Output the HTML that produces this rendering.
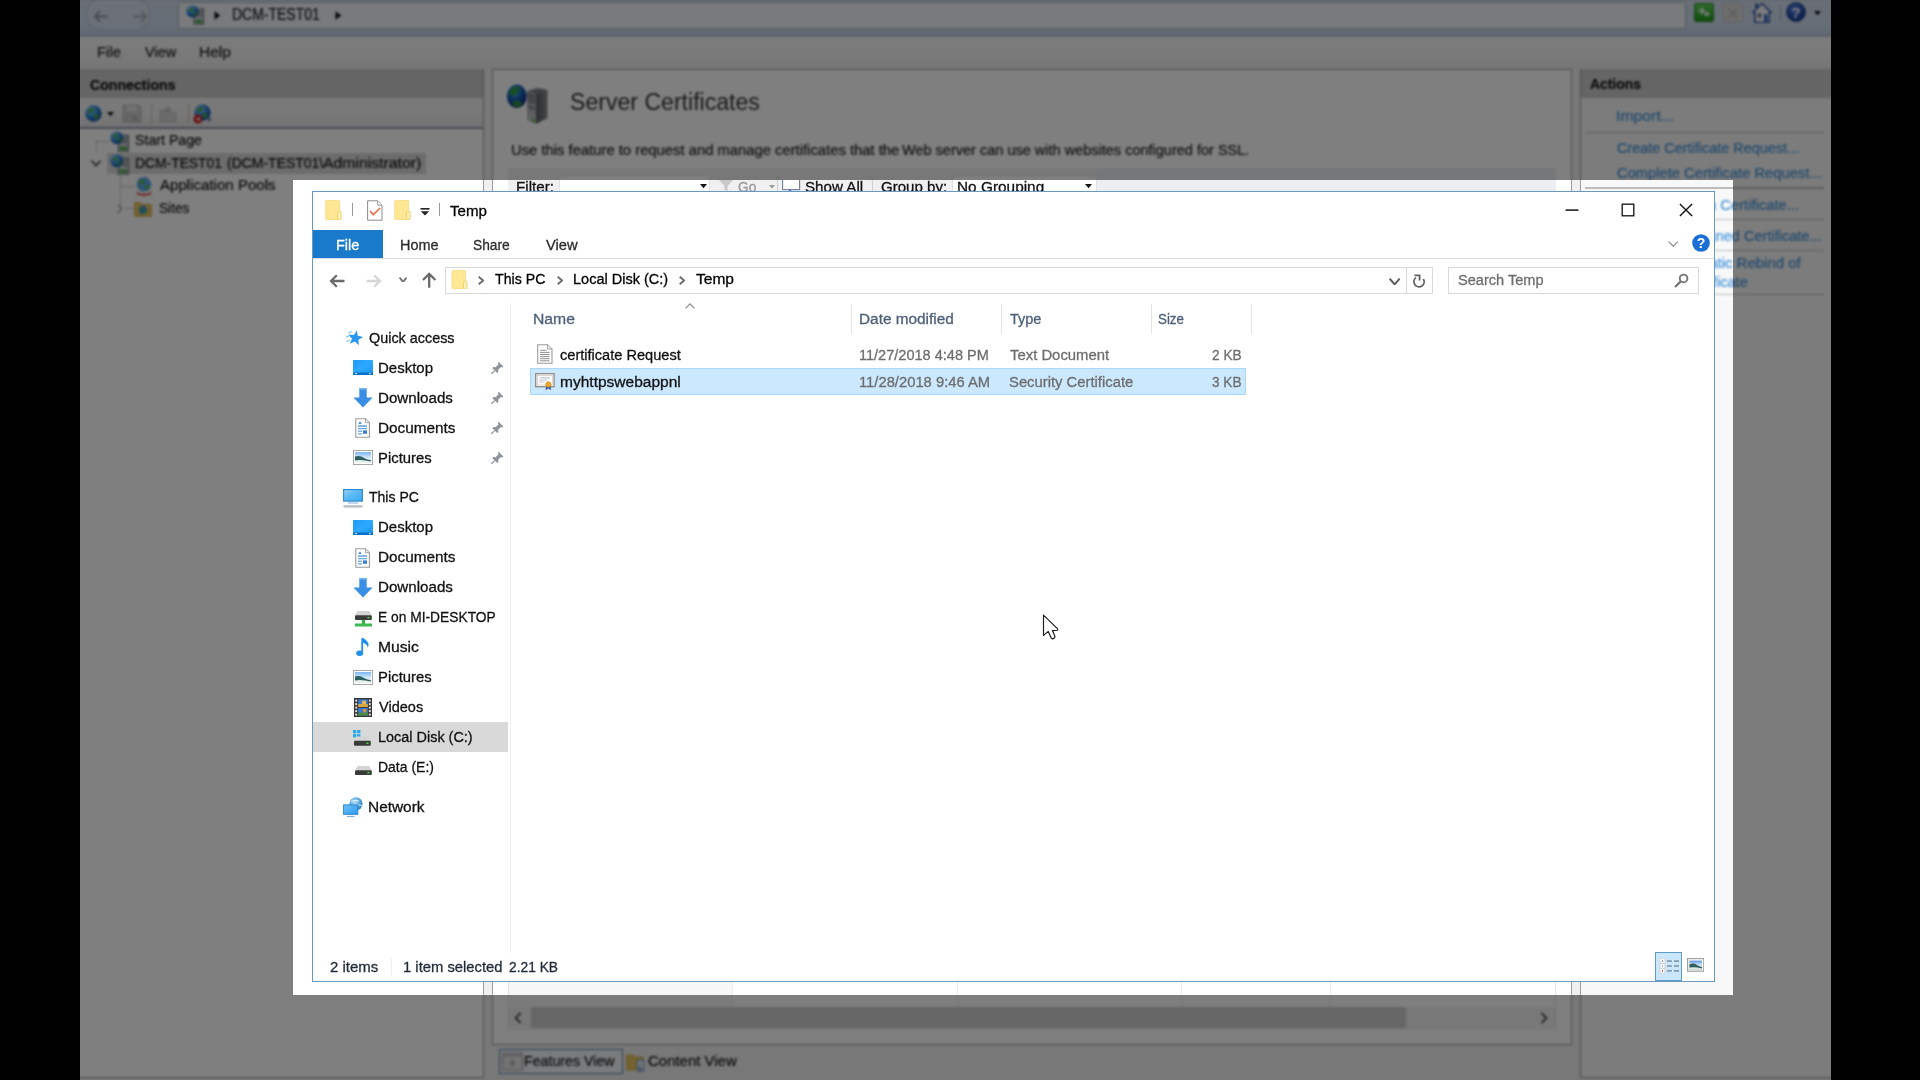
<!DOCTYPE html>
<html lang="en"><head><meta charset="utf-8"><title>Temp - File Explorer over IIS Manager</title>
<style>
html,body{margin:0;padding:0}
html{overflow:hidden;width:1920px;height:1080px}
body{width:1920px;height:1080px;overflow:hidden;position:relative;background:#000;font-family:'Liberation Sans',sans-serif;}
#root{position:absolute;left:0;top:0;width:1920px;height:1080px;overflow:hidden;background:#000}
.b{position:absolute;box-sizing:border-box;display:block}
.t{position:absolute;white-space:pre;transform-origin:0 50%;display:block;-webkit-text-stroke:0.3px currentColor}
.layer{position:absolute;left:0;top:0;width:1920px;height:1080px;overflow:hidden}
#iis{filter:blur(0.8px);top:-20px;left:-20px;width:1960px;height:1120px}
#iis>div{position:absolute;left:20px;top:20px;width:1920px;height:1080px}
#iis .t{-webkit-text-stroke:0.2px currentColor}
#ex{filter:blur(0.35px)}
#dim{position:absolute;left:293px;top:180px;width:1440px;height:815px;box-shadow:0 0 0 2000px rgba(0,0,0,0.5)}
.strip{position:absolute;left:293px;width:1440px;overflow:hidden}
#stripT{top:180px;height:11px}
#stripB{top:981px;height:14px}
#stripT>.layer{left:-293px;top:-180px}
#stripB>.layer{left:-293px;top:-981px}
</style></head>
<body>
<div id="root">
<div id="iis" class="layer"><div>
<div class="b" style="left:60px;top:-20px;width:1790px;height:1120px;background:#f0f0f0;"></div>
<div class="b" style="left:60px;top:-20px;width:1790px;height:21px;background:#d3deec;"></div>
<div class="b" style="left:60px;top:-20px;width:1790px;height:21.5px;background:#b9c6d9;"></div>
<div class="b" style="left:60px;top:0px;width:1790px;height:36px;background:linear-gradient(#d3deec,#cfdcee 60%,#c3d2e6);"></div>
<div class="b" style="left:60px;top:35px;width:1790px;height:2px;background:#b9c6d8;"></div>
<div class="b" style="left:86px;top:-2px;width:64px;height:33px;background:rgba(255,255,255,0.18);border-radius:16px;border:1px solid rgba(120,140,170,0.35);"></div>
<svg class="b" style="left:92.5px;top:9.5px;" width="15" height="13" viewBox="0 0 16 14"><path d="M15.5 7 H2 M7.8 1.2 L2 7 L7.8 12.8" fill="none" stroke="#8a94a2" stroke-width="2"/></svg>
<svg class="b" style="left:132.5px;top:9.5px;" width="15" height="13" viewBox="0 0 16 14"><path d="M0.5 7 H14 M8.2 1.2 L14 7 L8.2 12.8" fill="none" stroke="#a4adb8" stroke-width="2"/></svg>
<div class="b" style="left:177.5px;top:2px;width:1508px;height:27px;background:#f1f4f8;border:1px solid #aab6c6;border-radius:2px;"></div>
<svg class="b" style="left:186px;top:4.5px;" width="18.0" height="20.0" viewBox="0 0 18 20"><defs><radialGradient id="gl" cx="0.35" cy="0.3" r="0.8"><stop offset="0" stop-color="#9fe0ff"/><stop offset="0.5" stop-color="#2f8be0"/><stop offset="1" stop-color="#114a9a"/></radialGradient></defs><rect x="8" y="4" width="9.5" height="16" fill="#c3c9ce" stroke="#5f6a73" stroke-width="1"/><rect x="9.6" y="6.4" width="6.4" height="1.4" fill="#6e7a83"/><rect x="9.6" y="9.4" width="6.4" height="1.4" fill="#6e7a83"/><rect x="9.6" y="15" width="6.4" height="3.4" fill="#4fb04a"/><circle cx="6.4" cy="6.4" r="6" fill="url(#gl)"/><path d="M3 4.4 Q5.4 2.2 7.6 3.6 Q6.4 6 4.4 6.8 Q3.4 6 3 4.4Z M7 7.4 Q9.6 6.6 10.6 8.6 Q9 10.8 7.4 10 Z" fill="#4fae3a"/></svg>
<svg class="b" style="left:213.5px;top:10.5px;" width="7" height="9" viewBox="0 0 7 9"><path d="M0.5 0.3 L6.3 4.5 L0.5 8.7Z" fill="#111"/></svg>
<span class="t" style="left:231.86px;top:5.00px;font-size:16px;line-height:19px;color:#1a1a1a;transform:scaleX(0.8740);">DCM-TEST01</span>
<svg class="b" style="left:334.5px;top:10.5px;" width="7" height="9" viewBox="0 0 7 9"><path d="M0.5 0.3 L6.3 4.5 L0.5 8.7Z" fill="#111"/></svg>
<div class="b" style="left:1694px;top:2.5px;width:20px;height:19.5px;background:linear-gradient(#5fd05a,#1f9a1c);border-radius:2px;border:1px solid #2c8a2a;"></div>
<svg class="b" style="left:1697px;top:6px;" width="14" height="12" viewBox="0 0 14 12"><path d="M1 5 H7 M4 2 L7 5 L4 8" stroke="#fff" stroke-width="1.6" fill="none"/><path d="M13 8 H8 M10.5 5.6 L8 8 L10.5 10.4" stroke="#fff" stroke-width="1.4" fill="none"/></svg>
<div class="b" style="left:1723px;top:2.5px;width:19.5px;height:19.5px;background:#dcdcdc;border-radius:2px;border:1px solid #c2c2c2;"></div>
<svg class="b" style="left:1727px;top:6.5px;" width="12" height="12" viewBox="0 0 12 12"><path d="M1.5 1.5 L10.5 10.5 M10.5 1.5 L1.5 10.5" stroke="#bdbdbd" stroke-width="2"/></svg>
<svg class="b" style="left:1751.5px;top:1.5px;" width="20" height="21" viewBox="0 0 20 21"><path d="M10 1.5 L19.4 10.6 H17.2 V20.4 H2.8 V10.6 H0.6 Z" fill="#f4f6fa" stroke="#2f55a8" stroke-width="1.5"/><rect x="12" y="12.4" width="3.4" height="8" fill="#2f68c0"/><rect x="5.4" y="11.4" width="4" height="4" fill="#6d7f99"/><rect x="3.2" y="1.4" width="2.6" height="4.6" fill="#2f55a8"/></svg>
<div class="b" style="left:1780px;top:5px;width:1px;height:16px;background:#a9b4c4;"></div>
<svg class="b" style="left:1786px;top:2px;" width="20" height="20" viewBox="0 0 20 20"><defs><radialGradient id="hg" cx="0.4" cy="0.3" r="0.8"><stop offset="0" stop-color="#4d7fe0"/><stop offset="1" stop-color="#0c2a8a"/></radialGradient></defs><circle cx="10" cy="10" r="9.6" fill="url(#hg)" stroke="#33507e" stroke-width="0.8"/><text x="10" y="15.6" text-anchor="middle" font-family="Liberation Sans,sans-serif" font-weight="700" font-size="15.5" fill="#fff">?</text></svg>
<svg class="b" style="left:1814px;top:10.5px;" width="7" height="4.5" viewBox="0 0 7 4.5"><path d="M0 0 H7 L3.5 4.2Z" fill="#111"/></svg>
<div class="b" style="left:60px;top:37px;width:1790px;height:31.5px;background:linear-gradient(#fafafa,#ededed);"></div>
<span class="t" style="left:97.49px;top:42.00px;font-size:15.5px;line-height:19px;color:#1a1a1a;transform:scaleX(0.9585);">File</span>
<span class="t" style="left:144.61px;top:42.00px;font-size:15.5px;line-height:19px;color:#1a1a1a;transform:scaleX(0.9360);">View</span>
<span class="t" style="left:198.74px;top:42.00px;font-size:15.5px;line-height:19px;color:#1a1a1a;transform:scaleX(1.0022);">Help</span>
<div class="b" style="left:60px;top:69px;width:424px;height:1008.5px;background:#fff;border:1px solid #9e9e9e;border-left:none;"></div>
<div class="b" style="left:60px;top:69px;width:423px;height:28.5px;background:#cbcbcb;"></div>
<span class="t" style="left:90.47px;top:75.00px;font-size:15.5px;line-height:19px;color:#111;transform:scaleX(0.9115);font-weight:700;">Connections</span>
<div class="b" style="left:60px;top:97.5px;width:423px;height:30px;background:linear-gradient(#f6f6f6,#f0f0f0 60%,#e4e4e6);"></div>
<div class="b" style="left:60px;top:126.5px;width:423px;height:2px;background:#8f97a8;"></div>
<svg class="b" style="left:85px;top:104.5px;" width="17" height="17" viewBox="0 0 17 17"><defs><radialGradient id="gg" cx="0.35" cy="0.3" r="0.8"><stop offset="0" stop-color="#8fd6ff"/><stop offset="0.55" stop-color="#2a80d8"/><stop offset="1" stop-color="#123f8c"/></radialGradient></defs><circle cx="8.5" cy="8.5" r="8.2" fill="url(#gg)"/><path d="M3.4 5.4 Q6 2.4 9 3.6 Q8.4 7 5.6 8.6 Q3.8 7.6 3.4 5.4Z M9 9.6 Q12.6 8.4 14 11 Q12 14.4 9.6 13.4 Z" fill="#4cae3c"/></svg>
<svg class="b" style="left:107px;top:111.5px;" width="7" height="4.5" viewBox="0 0 7 4.5"><path d="M0 0 H7 L3.5 4.2Z" fill="#111"/></svg>
<svg class="b" style="left:122px;top:104px;" width="20" height="19" viewBox="0 0 20 19"><path d="M1 1 H16.5 L19 3.5 V18 H1Z" fill="#cfcfcf" stroke="#b4b4b4" stroke-width="1"/><rect x="4.6" y="1.6" width="10" height="6" fill="#e6e6e6"/><rect x="4" y="11" width="12" height="7" fill="#bcbcbc"/><rect x="6" y="12.6" width="3" height="4" fill="#dcdcdc"/></svg>
<div class="b" style="left:150.5px;top:104px;width:1px;height:19px;background:#c9c2a8;"></div>
<svg class="b" style="left:158.5px;top:104.5px;" width="18" height="18" viewBox="0 0 18 18"><path d="M1 5 H7 L9 7 H17 V17 H1Z" fill="#d6d6d6" stroke="#c2c2c2" stroke-width="0.8"/><path d="M9 1 L13 5 H10.6 V9 H7.4 V5 H5Z" fill="#c8c8c8"/></svg>
<div class="b" style="left:187.5px;top:104px;width:1px;height:19px;background:#c9c2a8;"></div>
<svg class="b" style="left:194px;top:103.5px;" width="17" height="17" viewBox="0 0 17 17"><defs><radialGradient id="gg" cx="0.35" cy="0.3" r="0.8"><stop offset="0" stop-color="#8fd6ff"/><stop offset="0.55" stop-color="#2a80d8"/><stop offset="1" stop-color="#123f8c"/></radialGradient></defs><circle cx="8.5" cy="8.5" r="8.2" fill="url(#gg)"/><path d="M3.4 5.4 Q6 2.4 9 3.6 Q8.4 7 5.6 8.6 Q3.8 7.6 3.4 5.4Z M9 9.6 Q12.6 8.4 14 11 Q12 14.4 9.6 13.4 Z" fill="#4cae3c"/></svg>
<svg class="b" style="left:192.5px;top:113.5px;" width="10" height="10" viewBox="0 0 10 10"><circle cx="5" cy="5" r="4.6" fill="#d8282a"/><path d="M3 5 L6.6 3 V7Z" fill="#fff"/></svg>
<svg class="b" style="left:207px;top:117px;" width="7" height="6" viewBox="0 0 7 6"><path d="M0 0 L5.5 2.6 L3 3.2 L2.2 5.6Z" fill="#5b7fb5"/></svg>
<div class="b" style="left:96px;top:140.5px;width:14px;height:1px;border-top:1px dotted #9a9a9a;"></div>
<div class="b" style="left:96px;top:140.5px;width:1px;height:12px;border-left:1px dotted #9a9a9a;"></div>
<svg class="b" style="left:110px;top:131px;" width="18.9" height="21.0" viewBox="0 0 18 20"><defs><radialGradient id="gl" cx="0.35" cy="0.3" r="0.8"><stop offset="0" stop-color="#9fe0ff"/><stop offset="0.5" stop-color="#2f8be0"/><stop offset="1" stop-color="#114a9a"/></radialGradient></defs><rect x="8" y="4" width="9.5" height="16" fill="#c3c9ce" stroke="#5f6a73" stroke-width="1"/><rect x="9.6" y="6.4" width="6.4" height="1.4" fill="#6e7a83"/><rect x="9.6" y="9.4" width="6.4" height="1.4" fill="#6e7a83"/><rect x="9.6" y="15" width="6.4" height="3.4" fill="#4fb04a"/><circle cx="6.4" cy="6.4" r="6" fill="url(#gl)"/><path d="M3 4.4 Q5.4 2.2 7.6 3.6 Q6.4 6 4.4 6.8 Q3.4 6 3 4.4Z M7 7.4 Q9.6 6.6 10.6 8.6 Q9 10.8 7.4 10 Z" fill="#4fae3a"/></svg>
<span class="t" style="left:135.38px;top:130.00px;font-size:15.5px;line-height:19px;color:#111;transform:scaleX(0.9147);">Start Page</span>
<div class="b" style="left:107px;top:153px;width:319px;height:20.5px;background:#d9d9d9;"></div>
<svg class="b" style="left:90.5px;top:160px;" width="10" height="6.5" viewBox="0 0 10 6.5"><path d="M0.6 0.6 L5.0 5.7 L9.4 0.6" fill="none" stroke="#4d4d4d" stroke-width="1.6"/></svg>
<svg class="b" style="left:110px;top:153.5px;" width="18.9" height="21.0" viewBox="0 0 18 20"><defs><radialGradient id="gl" cx="0.35" cy="0.3" r="0.8"><stop offset="0" stop-color="#9fe0ff"/><stop offset="0.5" stop-color="#2f8be0"/><stop offset="1" stop-color="#114a9a"/></radialGradient></defs><rect x="8" y="4" width="9.5" height="16" fill="#c3c9ce" stroke="#5f6a73" stroke-width="1"/><rect x="9.6" y="6.4" width="6.4" height="1.4" fill="#6e7a83"/><rect x="9.6" y="9.4" width="6.4" height="1.4" fill="#6e7a83"/><rect x="9.6" y="15" width="6.4" height="3.4" fill="#4fb04a"/><circle cx="6.4" cy="6.4" r="6" fill="url(#gl)"/><path d="M3 4.4 Q5.4 2.2 7.6 3.6 Q6.4 6 4.4 6.8 Q3.4 6 3 4.4Z M7 7.4 Q9.6 6.6 10.6 8.6 Q9 10.8 7.4 10 Z" fill="#4fae3a"/></svg>
<span class="t" style="left:135.07px;top:153.00px;font-size:15.5px;line-height:19px;color:#111;transform:scaleX(0.8938);">DCM-TEST01</span>
<span class="t" style="left:226.83px;top:153.00px;font-size:15.5px;line-height:19px;color:#111;transform:scaleX(0.9009);">(DCM-TEST01\</span>
<span class="t" style="left:323.40px;top:153.00px;font-size:15.5px;line-height:19px;color:#111;transform:scaleX(1.0176);">Administrator)</span>
<div class="b" style="left:119.5px;top:174px;width:1px;height:35px;border-left:1px dotted #9a9a9a;"></div>
<div class="b" style="left:119.5px;top:185.5px;width:14px;height:1px;border-top:1px dotted #9a9a9a;"></div>
<div class="b" style="left:126px;top:208px;width:8px;height:1px;border-top:1px dotted #9a9a9a;"></div>
<svg class="b" style="left:134px;top:175.5px;" width="20" height="20" viewBox="0 0 20 20"><circle cx="10" cy="8.4" r="7.6" fill="#5aa8e8"/><path d="M5 6 Q8 2.4 11 4 Q10 7.6 7 9 Q5.4 8 5 6Z M11 9.6 Q14.4 8.6 15.6 11 Q13.6 14 11.4 13Z" fill="#58b848"/><circle cx="10" cy="8.4" r="7.6" fill="none" stroke="#e9eef5" stroke-width="1.4" stroke-dasharray="5 3"/><path d="M2 15 Q6 19.4 10 17.4 Q14 19.4 18 15 L16.6 18.6 Q10 21 3.4 18.6Z" fill="#d63a32"/></svg>
<span class="t" style="left:159.75px;top:175.00px;font-size:15.5px;line-height:19px;color:#111;transform:scaleX(0.9722);">Application Pools</span>
<svg class="b" style="left:116.5px;top:203.5px;" width="5.5" height="10" viewBox="0 0 5.5 10"><path d="M0.7 0.7 L4.7 5.0 L0.7 9.3" fill="none" stroke="#a0a0a0" stroke-width="1.3"/></svg>
<svg class="b" style="left:134px;top:198.5px;" width="18" height="18" viewBox="0 0 18 18"><path d="M0.6 3.6 H6.6 L8.4 5.4 H17.4 V17.4 H0.6Z" fill="#e8c45c" stroke="#c9a53e" stroke-width="0.8"/><circle cx="9" cy="11" r="4.2" fill="#3f93dc"/><path d="M6.6 10 Q8.4 7.6 10 8.6 Q9.6 10.8 7.8 11.8Z M9.6 11.8 Q11.6 11 12.4 12.6 Q11 14.4 9.8 13.8Z" fill="#58b848"/></svg>
<span class="t" style="left:159.15px;top:198.00px;font-size:15.5px;line-height:19px;color:#111;transform:scaleX(0.8803);">Sites</span>
<div class="b" style="left:492px;top:69px;width:1079.5px;height:976px;background:#fff;border:1px solid #9e9e9e;"></div>
<svg class="b" style="left:500px;top:80px;" width="50" height="46" viewBox="0 0 50 46"><defs><radialGradient id="bg1" cx="0.38" cy="0.28" r="0.75"><stop offset="0" stop-color="#7fe0e8"/><stop offset="0.35" stop-color="#1f74c8"/><stop offset="1" stop-color="#0a1f7a"/></radialGradient><linearGradient id="bs" x1="0" y1="0" x2="1" y2="0"><stop offset="0" stop-color="#5a5c5e"/><stop offset="1" stop-color="#8a8c8e"/></linearGradient><linearGradient id="bf" x1="0" y1="0" x2="0" y2="1"><stop offset="0" stop-color="#8f959b"/><stop offset="1" stop-color="#c9cdd1"/></linearGradient></defs><path d="M27 11 L38 8 L47.5 10 L36 13.5Z" fill="#7a7d80"/><path d="M36 13.5 L47.5 10 V38 L36 44Z" fill="url(#bs)"/><path d="M27 11 L36 13.5 V44 L27 40.5Z" fill="url(#bf)"/><path d="M28.4 15 L34.6 16.8 M28.4 18 L34.6 19.8 M28.4 21 L34.6 22.8 M28.4 27 L34.6 28.8" stroke="#5c6368" stroke-width="1.1"/><path d="M31.6 38.6 L35 39.8 V42.6 L31.6 41.4Z" fill="#5fc23a"/><ellipse cx="16.8" cy="16.3" rx="9.9" ry="11.7" fill="url(#bg1)"/><path d="M9.5 12 Q12 6.2 18 6.6 Q21 9 17.6 13.4 Q13 16 10.4 15.4Z M12 22 Q17 19.4 22.6 22.4 Q21 27 16.8 27.6 Q13 26.4 12 22Z" fill="#2f9a3a" opacity="0.9"/></svg>
<span class="t" style="left:569.99px;top:88.00px;font-size:23.5px;line-height:28px;color:#333;transform:scaleX(0.9823);-webkit-text-stroke:0;">Server Certificates</span>
<span class="t" style="left:510.89px;top:140.00px;font-size:15.5px;line-height:19px;color:#1a1a1a;transform:scaleX(0.9547);">Use this feature to request and manage certificates that the</span>
<span class="t" style="left:901.91px;top:140.00px;font-size:15.5px;line-height:19px;color:#1a1a1a;transform:scaleX(0.9362);">Web server can use with websites configured for SSL.</span>
<div class="b" style="left:508px;top:168px;width:1047.5px;height:30px;background:#eceef2;"></div>
<div class="b" style="left:508px;top:168px;width:589px;height:30px;background:#f1f0f0;"></div>
<div class="b" style="left:558.5px;top:174.5px;width:151px;height:22px;background:#fff;border:1px solid #e2e2e2;"></div>
<div class="b" style="left:777px;top:176px;width:1px;height:19px;background:#d0d0d0;"></div>
<div class="b" style="left:872px;top:176px;width:1px;height:19px;background:#d0d0d0;"></div>
<div class="b" style="left:951.5px;top:174.5px;width:145px;height:22px;background:#fff;border:1px solid #e2e2e2;"></div>
<div class="b" style="left:508px;top:198px;width:1048px;height:832px;background:#fff;border:1px solid #e3e3e3;"></div>
<div class="b" style="left:509px;top:222px;width:223.5px;height:785px;background:#f7f7f7;"></div>
<div class="b" style="left:732px;top:199px;width:1px;height:808px;background:#ededed;"></div>
<div class="b" style="left:957px;top:199px;width:1px;height:808px;background:#ededed;"></div>
<div class="b" style="left:1181px;top:199px;width:1px;height:808px;background:#ededed;"></div>
<div class="b" style="left:1330px;top:199px;width:1px;height:808px;background:#ededed;"></div>
<div class="b" style="left:509px;top:1007px;width:1046px;height:21px;background:#f0f0f0;"></div>
<div class="b" style="left:530.5px;top:1007px;width:875px;height:21px;background:#cdcdcd;"></div>
<svg class="b" style="left:514px;top:1011.5px;" width="8" height="12" viewBox="0 0 8 12"><path d="M6.6 1 L1.6 6 L6.6 11" stroke="#555" stroke-width="2" fill="none"/></svg>
<svg class="b" style="left:1540px;top:1011.5px;" width="8" height="12" viewBox="0 0 8 12"><path d="M1.4 1 L6.4 6 L1.4 11" stroke="#555" stroke-width="2" fill="none"/></svg>
<div class="b" style="left:498.5px;top:1048.5px;width:124.5px;height:25.5px;background:#f4f7fa;border:1.5px solid #4f86b0;"></div>
<svg class="b" style="left:502px;top:1051px;" width="22" height="20" viewBox="0 0 22 20"><rect x="0.6" y="2" width="20" height="17" fill="#e8e8e8" stroke="#9a9a9a" stroke-width="1"/><rect x="0.6" y="2" width="20" height="4" fill="#c9c9c9"/><rect x="8" y="9" width="5" height="6" fill="#bdbdbd"/></svg>
<span class="t" style="left:524.34px;top:1051.00px;font-size:15.5px;line-height:19px;color:#111;transform:scaleX(0.9174);">Features View</span>
<svg class="b" style="left:626px;top:1051px;" width="20" height="21" viewBox="0 0 20 21"><path d="M0.6 4 H7 L9 6 H17 V19 H0.6Z" fill="#e9c661" stroke="#c9a53e" stroke-width="0.8"/><path d="M11 9 H18 V20.4 H11Z" fill="#dfe9f6" stroke="#6e8cc0" stroke-width="0.9"/><path d="M12 14 L17 19.4 L14.8 18.8 L14 20.6Z" fill="#5b7fb5"/></svg>
<span class="t" style="left:648.25px;top:1051.00px;font-size:15.5px;line-height:19px;color:#111;transform:scaleX(0.9653);">Content View</span>
<div class="b" style="left:1580px;top:69px;width:280px;height:1008.5px;background:#f8f8f8;border:1px solid #9e9e9e;border-right:none;"></div>
<div class="b" style="left:1581px;top:69px;width:279px;height:28.5px;background:#cbcbcb;"></div>
<span class="t" style="left:1589.65px;top:74.00px;font-size:15.5px;line-height:19px;color:#111;transform:scaleX(0.8945);font-weight:700;">Actions</span>
<span class="t" style="left:1616.02px;top:106.00px;font-size:15.5px;line-height:19px;color:#3f90d8;transform:scaleX(1.0193);">Import...</span>
<div class="b" style="left:1585px;top:131.5px;width:239px;height:1.5px;background:#bcbcbc;"></div>
<span class="t" style="left:1616.78px;top:138.00px;font-size:15.5px;line-height:19px;color:#3f90d8;transform:scaleX(0.9309);">Create Certificate Request...</span>
<span class="t" style="left:1616.76px;top:163.00px;font-size:15.5px;line-height:19px;color:#3f90d8;transform:scaleX(0.9497);">Complete Certificate Request...</span>
<div class="b" style="left:1585px;top:187px;width:239px;height:1.5px;background:#bcbcbc;"></div>
<span class="t" style="left:1616.76px;top:195.00px;font-size:15.5px;line-height:19px;color:#3f90d8;transform:scaleX(0.9519);">Create Domain Certificate...</span>
<div class="b" style="left:1585px;top:218.5px;width:239px;height:1.5px;background:#bcbcbc;"></div>
<span class="t" style="left:1616.77px;top:226.00px;font-size:15.5px;line-height:19px;color:#3f90d8;transform:scaleX(0.9386);">Create Self-Signed Certificate...</span>
<div class="b" style="left:1585px;top:249.5px;width:239px;height:1.5px;background:#bcbcbc;"></div>
<span class="t" style="left:1616.28px;top:253.00px;font-size:15.5px;line-height:19px;color:#3f90d8;transform:scaleX(0.9654);">Enable Automatic Rebind of</span>
<span class="t" style="left:1616.31px;top:272.00px;font-size:15.5px;line-height:19px;color:#3f90d8;transform:scaleX(0.9444);">Renewed Certificate</span>
<div class="b" style="left:1585px;top:293.5px;width:239px;height:1.5px;background:#bcbcbc;"></div>
<svg class="b" style="left:1592px;top:301px;" width="18" height="18" viewBox="0 0 18 18"><circle cx="9" cy="9" r="8.6" fill="#2a5fd0"/><text x="9" y="14" text-anchor="middle" font-family="Liberation Sans,sans-serif" font-weight="700" font-size="13" fill="#fff">?</text></svg>
<span class="t" style="left:1616.26px;top:300.00px;font-size:15.5px;line-height:19px;color:#3f90d8;transform:scaleX(0.9855);">Help</span>
</div></div>
<div id="dim"></div>
<div id="stripT" class="strip"><div class="layer">
<div class="b" style="left:60px;top:-20px;width:1790px;height:1120px;background:#f0f0f0;"></div>
<div class="b" style="left:60px;top:69px;width:424px;height:1008.5px;background:#fff;border:1px solid #9e9e9e;border-left:none;"></div>
<div class="b" style="left:492px;top:69px;width:1079.5px;height:976px;background:#fff;border:1px solid #9e9e9e;"></div>
<div class="b" style="left:508px;top:168px;width:1047.5px;height:30px;background:#eceef2;"></div>
<div class="b" style="left:508px;top:168px;width:589px;height:30px;background:#f1f0f0;"></div>
<div class="b" style="left:558.5px;top:174.5px;width:151px;height:22px;background:#fff;border:1px solid #e2e2e2;"></div>
<div class="b" style="left:777px;top:176px;width:1px;height:19px;background:#d0d0d0;"></div>
<div class="b" style="left:872px;top:176px;width:1px;height:19px;background:#d0d0d0;"></div>
<div class="b" style="left:951.5px;top:174.5px;width:145px;height:22px;background:#fff;border:1px solid #e2e2e2;"></div>
<div class="b" style="left:508px;top:198px;width:1048px;height:832px;background:#fff;border:1px solid #e3e3e3;"></div>
<div class="b" style="left:509px;top:222px;width:223.5px;height:785px;background:#f7f7f7;"></div>
<div class="b" style="left:732px;top:199px;width:1px;height:808px;background:#ededed;"></div>
<div class="b" style="left:957px;top:199px;width:1px;height:808px;background:#ededed;"></div>
<div class="b" style="left:1181px;top:199px;width:1px;height:808px;background:#ededed;"></div>
<div class="b" style="left:1330px;top:199px;width:1px;height:808px;background:#ededed;"></div>
<div class="b" style="left:1580px;top:69px;width:280px;height:1008.5px;background:#f8f8f8;border:1px solid #9e9e9e;border-right:none;"></div>
<div class="b" style="left:1585px;top:131.5px;width:239px;height:1.5px;background:#bcbcbc;"></div>
<div class="b" style="left:1585px;top:187px;width:239px;height:1.5px;background:#bcbcbc;"></div>
<div class="b" style="left:1585px;top:218.5px;width:239px;height:1.5px;background:#bcbcbc;"></div>
<div class="b" style="left:1585px;top:249.5px;width:239px;height:1.5px;background:#bcbcbc;"></div>
<div class="b" style="left:1585px;top:293.5px;width:239px;height:1.5px;background:#bcbcbc;"></div>
<span class="t" style="left:516.26px;top:177.00px;font-size:15.5px;line-height:19px;color:#111;transform:scaleX(0.9824);">Filter:</span>
<svg class="b" style="left:699.5px;top:184px;" width="7" height="4.5" viewBox="0 0 7 4.5"><path d="M0 0 H7 L3.5 4.2Z" fill="#111"/></svg>
<svg class="b" style="left:718px;top:179px;" width="16" height="13" viewBox="0 0 16 13"><path d="M0.5 0.5 H15.5 L9.6 7 V12.4 L6.4 10.6 V7Z" fill="#c9c9c9"/></svg>
<span class="t" style="left:738.31px;top:177.00px;font-size:15.5px;line-height:19px;color:#9a9a9a;transform:scaleX(0.8863);">Go</span>
<svg class="b" style="left:768.5px;top:185px;" width="6" height="4" viewBox="0 0 6 4"><path d="M0 0 H6 L3 3.6Z" fill="#9a9a9a"/></svg>
<svg class="b" style="left:782px;top:177px;" width="20" height="17" viewBox="0 0 20 17"><rect x="0.6" y="0.6" width="17" height="12" fill="#fff" stroke="#6e7f99" stroke-width="1.1"/><path d="M3 14.6 H9 M7 12.4 L9.4 14.6 L7 16.6" stroke="#3a6fc4" stroke-width="1.3" fill="none"/><path d="M12 14.6 H18" stroke="#3a6fc4" stroke-width="1.3"/></svg>
<span class="t" style="left:805.34px;top:177.00px;font-size:15.5px;line-height:19px;color:#111;transform:scaleX(0.9786);">Show All</span>
<span class="t" style="left:881.25px;top:177.00px;font-size:15.5px;line-height:19px;color:#111;transform:scaleX(0.9715);">Group by:</span>
<span class="t" style="left:956.75px;top:177.00px;font-size:15.5px;line-height:19px;color:#111;transform:scaleX(0.9926);">No Grouping</span>
<svg class="b" style="left:1084.5px;top:184px;" width="7" height="4.5" viewBox="0 0 7 4.5"><path d="M0 0 H7 L3.5 4.2Z" fill="#111"/></svg>
</div></div>
<div id="stripB" class="strip"><div class="layer">
<div class="b" style="left:60px;top:-20px;width:1790px;height:1120px;background:#f0f0f0;"></div>
<div class="b" style="left:60px;top:69px;width:424px;height:1008.5px;background:#fff;border:1px solid #9e9e9e;border-left:none;"></div>
<div class="b" style="left:492px;top:69px;width:1079.5px;height:976px;background:#fff;border:1px solid #9e9e9e;"></div>
<div class="b" style="left:508px;top:168px;width:1047.5px;height:30px;background:#eceef2;"></div>
<div class="b" style="left:508px;top:168px;width:589px;height:30px;background:#f1f0f0;"></div>
<div class="b" style="left:558.5px;top:174.5px;width:151px;height:22px;background:#fff;border:1px solid #e2e2e2;"></div>
<div class="b" style="left:777px;top:176px;width:1px;height:19px;background:#d0d0d0;"></div>
<div class="b" style="left:872px;top:176px;width:1px;height:19px;background:#d0d0d0;"></div>
<div class="b" style="left:951.5px;top:174.5px;width:145px;height:22px;background:#fff;border:1px solid #e2e2e2;"></div>
<div class="b" style="left:508px;top:198px;width:1048px;height:832px;background:#fff;border:1px solid #e3e3e3;"></div>
<div class="b" style="left:509px;top:222px;width:223.5px;height:785px;background:#f7f7f7;"></div>
<div class="b" style="left:732px;top:199px;width:1px;height:808px;background:#ededed;"></div>
<div class="b" style="left:957px;top:199px;width:1px;height:808px;background:#ededed;"></div>
<div class="b" style="left:1181px;top:199px;width:1px;height:808px;background:#ededed;"></div>
<div class="b" style="left:1330px;top:199px;width:1px;height:808px;background:#ededed;"></div>
<div class="b" style="left:1580px;top:69px;width:280px;height:1008.5px;background:#f8f8f8;border:1px solid #9e9e9e;border-right:none;"></div>
<div class="b" style="left:1585px;top:131.5px;width:239px;height:1.5px;background:#bcbcbc;"></div>
<div class="b" style="left:1585px;top:187px;width:239px;height:1.5px;background:#bcbcbc;"></div>
<div class="b" style="left:1585px;top:218.5px;width:239px;height:1.5px;background:#bcbcbc;"></div>
<div class="b" style="left:1585px;top:249.5px;width:239px;height:1.5px;background:#bcbcbc;"></div>
<div class="b" style="left:1585px;top:293.5px;width:239px;height:1.5px;background:#bcbcbc;"></div>
</div></div>
<div class="b" style="left:0px;top:0px;width:79.5px;height:1080px;background:#000;"></div>
<div class="b" style="left:1830.5px;top:0px;width:90px;height:1080px;background:#000;"></div>
<div id="ex" class="layer">
<div class="b" style="left:312px;top:190.5px;width:1403px;height:791px;background:#fff;border:1.2px solid #6699c4;"></div>
<svg class="b" style="left:325px;top:200px;" width="17" height="20" viewBox="0 0 17 20"><rect x="0.7" y="0.5" width="14" height="19" rx="0.8" fill="#ffe794" stroke="#f3d778" stroke-width="0.7"/><rect x="12.6" y="11.6" width="3.6" height="7.9" rx="0.6" fill="#fff0b4" stroke="#eccb62" stroke-width="0.8"/></svg>
<div class="b" style="left:351.5px;top:203px;width:1px;height:13px;background:#9a9a9a;"></div>
<svg class="b" style="left:365.5px;top:200px;" width="18" height="21" viewBox="0 0 18 21"><path d="M1.6 0.8 H11.6 L16 5.2 V20.2 H1.6 Z" fill="#fff" stroke="#8c8c8c" stroke-width="1"/><path d="M11.6 0.8 V5.2 H16" fill="#f4f4f4" stroke="#9a9a9a" stroke-width="0.9"/><path d="M3.9 10.9 L7.3 14.6 L14.2 8" fill="none" stroke="#e06a45" stroke-width="1.5"/></svg>
<svg class="b" style="left:394px;top:200px;" width="17" height="20" viewBox="0 0 17 20"><rect x="0.7" y="0.5" width="14" height="19" rx="0.8" fill="#ffe794" stroke="#f3d778" stroke-width="0.7"/><rect x="12.6" y="11.6" width="3.6" height="7.9" rx="0.6" fill="#fff0b4" stroke="#eccb62" stroke-width="0.8"/></svg>
<svg class="b" style="left:420px;top:207.7px;" width="10" height="8" viewBox="0 0 10 8"><rect x="0.5" y="0" width="9" height="1.6" fill="#222"/><path d="M0.8 3.2 H9.2 L5 7.4 Z" fill="#222"/></svg>
<div class="b" style="left:439px;top:203px;width:1px;height:13px;background:#9a9a9a;"></div>
<span class="t" style="left:449.72px;top:201.00px;font-size:15.5px;line-height:19px;color:#000;transform:scaleX(0.9754);">Temp</span>
<svg class="b" style="left:1565px;top:208.6px;" width="14" height="2.4" viewBox="0 0 14 2.4"><rect x="0.5" y="0.3" width="13" height="1.6" fill="#222"/></svg>
<svg class="b" style="left:1621px;top:202.5px;" width="14" height="14" viewBox="0 0 14 14"><rect x="1.2" y="1.2" width="11.6" height="11.6" fill="none" stroke="#111" stroke-width="1.3"/></svg>
<svg class="b" style="left:1679px;top:202.5px;" width="14" height="14" viewBox="0 0 14 14"><path d="M0.9 0.9 L13.1 13.1 M13.1 0.9 L0.9 13.1" stroke="#111" stroke-width="1.35" fill="none"/></svg>
<div class="b" style="left:313px;top:229.5px;width:69.5px;height:28px;background:#1979ca;"></div>
<span class="t" style="left:336.33px;top:235.00px;font-size:15.5px;line-height:19px;color:#fff;transform:scaleX(0.9325);">File</span>
<span class="t" style="left:399.58px;top:235.00px;font-size:15.5px;line-height:19px;color:#2b2b2b;transform:scaleX(0.9321);">Home</span>
<span class="t" style="left:473.40px;top:235.00px;font-size:15.5px;line-height:19px;color:#2b2b2b;transform:scaleX(0.8873);">Share</span>
<span class="t" style="left:545.91px;top:235.00px;font-size:15.5px;line-height:19px;color:#2b2b2b;transform:scaleX(0.9480);">View</span>
<div class="b" style="left:313px;top:257.5px;width:1401px;height:1px;background:#dadbdc;"></div>
<svg class="b" style="left:1668px;top:240.5px;" width="10.5" height="6" viewBox="0 0 10.5 6"><path d="M0.6 0.6 L5.25 5.2 L9.9 0.6" fill="none" stroke="#8d8d8d" stroke-width="1.3"/></svg>
<svg class="b" style="left:1691.5px;top:234px;" width="18" height="18" viewBox="0 0 18 18"><circle cx="9" cy="9" r="8.8" fill="#1a6fd4"/><text x="9" y="14" text-anchor="middle" font-family="Liberation Sans,sans-serif" font-weight="700" font-size="14" fill="#fff">?</text></svg>
<svg class="b" style="left:329px;top:273.5px;" width="16" height="14" viewBox="0 0 16 14"><path d="M15.5 7 H2 M7.8 1.2 L2 7 L7.8 12.8" fill="none" stroke="#6a6a6a" stroke-width="2.3"/></svg>
<svg class="b" style="left:365.5px;top:273.5px;" width="16" height="14" viewBox="0 0 16 14"><path d="M0.5 7 H14 M8.2 1.2 L14 7 L8.2 12.8" fill="none" stroke="#d6d6d6" stroke-width="2.3"/></svg>
<svg class="b" style="left:399.2px;top:276.8px;" width="8.2" height="5.6" viewBox="0 0 8.2 5.6"><path d="M0.6 0.6 L4.1 4.8 L7.6 0.6" fill="none" stroke="#707070" stroke-width="1.9"/></svg>
<svg class="b" style="left:421.6px;top:272px;" width="14" height="16" viewBox="0 0 14 16"><path d="M7.2 15.8 V2.2 M1 8 L7.2 1.9 L13.4 8" fill="none" stroke="#6a6a6a" stroke-width="2.3"/></svg>
<div class="b" style="left:445px;top:267px;width:987.5px;height:26.5px;background:#fff;border:1px solid #d9d9d9;"></div>
<svg class="b" style="left:451px;top:269.5px;" width="17" height="19.5" viewBox="0 0 17 20"><rect x="0.7" y="0.5" width="14" height="19" rx="0.8" fill="#ffe794" stroke="#f3d778" stroke-width="0.7"/><rect x="12.6" y="11.6" width="3.6" height="7.9" rx="0.6" fill="#fff0b4" stroke="#eccb62" stroke-width="0.8"/></svg>
<svg class="b" style="left:477.6px;top:275.6px;" width="6" height="9" viewBox="0 0 6 9"><path d="M0.7 0.7 L5.2 4.5 L0.7 8.3" fill="none" stroke="#6a6a6a" stroke-width="1.9"/></svg>
<svg class="b" style="left:556.6px;top:275.6px;" width="6" height="9" viewBox="0 0 6 9"><path d="M0.7 0.7 L5.2 4.5 L0.7 8.3" fill="none" stroke="#6a6a6a" stroke-width="1.9"/></svg>
<svg class="b" style="left:678.6px;top:275.6px;" width="6" height="9" viewBox="0 0 6 9"><path d="M0.7 0.7 L5.2 4.5 L0.7 8.3" fill="none" stroke="#6a6a6a" stroke-width="1.9"/></svg>
<span class="t" style="left:494.73px;top:269.00px;font-size:15.5px;line-height:19px;color:#000;transform:scaleX(0.9141);">This PC</span>
<span class="t" style="left:572.57px;top:269.00px;font-size:15.5px;line-height:19px;color:#000;transform:scaleX(0.9357);">Local Disk (C:)</span>
<span class="t" style="left:695.71px;top:269.00px;font-size:15.5px;line-height:19px;color:#000;transform:scaleX(1.0025);">Temp</span>
<svg class="b" style="left:1389px;top:278px;" width="11.3" height="7.2" viewBox="0 0 11.3 7.2"><path d="M0.6 0.6 L5.65 6.4 L10.700000000000001 0.6" fill="none" stroke="#5e5e5e" stroke-width="2"/></svg>
<div class="b" style="left:1406px;top:268px;width:1px;height:24.5px;background:#d9d9d9;"></div>
<svg class="b" style="left:1412.4px;top:272.6px;" width="14" height="16" viewBox="0 0 14 16"><path d="M11.3 5.9 A5.1 5.1 0 1 1 4 4.6" fill="none" stroke="#5e5e5e" stroke-width="1.8"/><path d="M2.4 2.3 H7.6 V7.4" fill="none" stroke="#5e5e5e" stroke-width="1.8"/></svg>
<div class="b" style="left:1447.5px;top:267px;width:251.5px;height:26.5px;background:#fff;border:1px solid #d9d9d9;"></div>
<span class="t" style="left:1458.11px;top:270.00px;font-size:15.5px;line-height:19px;color:#6d6d6d;transform:scaleX(0.9392);">Search Temp</span>
<svg class="b" style="left:1673.5px;top:272.5px;" width="15" height="15" viewBox="0 0 15 15"><circle cx="9.6" cy="5.4" r="3.8" fill="none" stroke="#747474" stroke-width="1.9"/><path d="M6.8 8.4 L1 14" stroke="#747474" stroke-width="2.2"/></svg>
<div class="b" style="left:510px;top:303px;width:1px;height:650px;background:#f0f0f0;"></div>
<div class="b" style="left:313px;top:722px;width:194.5px;height:30px;background:#d9d9d9;"></div>
<svg class="b" style="left:345px;top:329.8px;" width="19" height="16" viewBox="0 0 19 16"><path d="M11.8 0.4 L12.8 5.8 L18.2 7.1 L13.4 9.8 L13.9 15.3 L9.8 11.5 L4.7 13.7 L7.0 8.7 L3.4 4.5 L8.9 5.1Z" fill="#2a98f0"/><path d="M6.6 1.6 L3.4 3 M4.4 5.6 L0.8 7.2 M4.6 10 L1.4 11.4" stroke="#7cc4f8" stroke-width="1.2"/></svg>
<span class="t" style="left:368.77px;top:328.00px;font-size:15.5px;line-height:19px;color:#111;transform:scaleX(0.9283);">Quick access</span>
<svg class="b" style="left:353px;top:360.2px;" width="20" height="15" viewBox="0 0 20 15"><defs><linearGradient id="dg" x1="0" y1="0" x2="1" y2="1"><stop offset="0" stop-color="#1e9af5"/><stop offset="0.5" stop-color="#2fa9ff"/><stop offset="1" stop-color="#1794f0"/></linearGradient></defs><rect x="0" y="0" width="20" height="15" rx="0.8" fill="url(#dg)"/><rect x="0" y="12.5" width="20" height="2.5" fill="#0d70c6"/><rect x="2.2" y="13" width="1.6" height="1.2" fill="#d9ecff"/><rect x="16" y="13" width="1.6" height="1.2" fill="#d9ecff"/></svg>
<span class="t" style="left:378.18px;top:358.00px;font-size:15.5px;line-height:19px;color:#111;transform:scaleX(0.9667);">Desktop</span>
<svg class="b" style="left:491px;top:361.3px;" width="13" height="13.5" viewBox="0 0 13 13.5"><path d="M7.6 0.8 L12.4 5.6 L11.2 6.4 L10 6 L7.2 8.8 L7.4 11 L6.2 12 L1.4 7.2 L2.4 6 L4.6 6.2 L7.4 3.4 L7 2 Z" fill="#8e9499"/><path d="M3.6 9.6 L0.4 12.8" stroke="#8e9499" stroke-width="1.3"/></svg>
<svg class="b" style="left:352.8px;top:388px;" width="20" height="20" viewBox="0 0 20 20"><path d="M6.3 0.4 H13.7 V9.4 H19.6 L10 19.6 L0.4 9.4 H6.3 Z" fill="#3a8ee6"/><path d="M6.3 0.4 H13.7 V2 H6.3Z" fill="#5aa5ee"/></svg>
<span class="t" style="left:378.17px;top:388.00px;font-size:15.5px;line-height:19px;color:#111;transform:scaleX(0.9762);">Downloads</span>
<svg class="b" style="left:491px;top:391.3px;" width="13" height="13.5" viewBox="0 0 13 13.5"><path d="M7.6 0.8 L12.4 5.6 L11.2 6.4 L10 6 L7.2 8.8 L7.4 11 L6.2 12 L1.4 7.2 L2.4 6 L4.6 6.2 L7.4 3.4 L7 2 Z" fill="#8e9499"/><path d="M3.6 9.6 L0.4 12.8" stroke="#8e9499" stroke-width="1.3"/></svg>
<svg class="b" style="left:355px;top:417.8px;" width="15" height="20" viewBox="0 0 15 20"><path d="M0.8 0.8 H10.5 L14.4 4.7 V19.2 H0.8 Z" fill="#fff" stroke="#9a9a9a" stroke-width="1.1"/><path d="M10.5 0.8 V4.7 H14.4" fill="#eee" stroke="#9a9a9a" stroke-width="0.9"/><path d="M5 3.2 L3.2 6 H6.8 Z" fill="#4a90d9"/><rect x="3" y="7.4" width="9" height="1.3" fill="#4a90d9"/><rect x="3" y="10" width="9" height="1.3" fill="#6aa8e4"/><rect x="3" y="12.6" width="4" height="1.3" fill="#6aa8e4"/><rect x="8" y="12.4" width="4" height="3.4" fill="#3b7fd0"/><rect x="3" y="15.2" width="4" height="1.3" fill="#6aa8e4"/></svg>
<span class="t" style="left:378.16px;top:418.00px;font-size:15.5px;line-height:19px;color:#111;transform:scaleX(0.9878);">Documents</span>
<svg class="b" style="left:491px;top:421.3px;" width="13" height="13.5" viewBox="0 0 13 13.5"><path d="M7.6 0.8 L12.4 5.6 L11.2 6.4 L10 6 L7.2 8.8 L7.4 11 L6.2 12 L1.4 7.2 L2.4 6 L4.6 6.2 L7.4 3.4 L7 2 Z" fill="#8e9499"/><path d="M3.6 9.6 L0.4 12.8" stroke="#8e9499" stroke-width="1.3"/></svg>
<svg class="b" style="left:353px;top:450.2px;" width="20" height="15" viewBox="0 0 20 15"><rect x="0.5" y="0.5" width="19" height="14" fill="#fff" stroke="#a8a8a8" stroke-width="1"/><defs><linearGradient id="pg" x1="0" y1="0" x2="0" y2="1"><stop offset="0" stop-color="#7cb6f2"/><stop offset="0.55" stop-color="#d8ecfb"/><stop offset="1" stop-color="#fff"/></linearGradient></defs><rect x="2" y="2" width="16" height="11" fill="url(#pg)"/><path d="M2 6.4 Q7 5 11 8 Q14.5 10 18 10.2 V13 H2 Z" fill="#2c5f62"/><path d="M2 10.6 Q8 9.2 18 11.6 V13 H2Z" fill="#e9f1ee"/></svg>
<span class="t" style="left:378.19px;top:448.00px;font-size:15.5px;line-height:19px;color:#111;transform:scaleX(0.9584);">Pictures</span>
<svg class="b" style="left:491px;top:451.3px;" width="13" height="13.5" viewBox="0 0 13 13.5"><path d="M7.6 0.8 L12.4 5.6 L11.2 6.4 L10 6 L7.2 8.8 L7.4 11 L6.2 12 L1.4 7.2 L2.4 6 L4.6 6.2 L7.4 3.4 L7 2 Z" fill="#8e9499"/><path d="M3.6 9.6 L0.4 12.8" stroke="#8e9499" stroke-width="1.3"/></svg>
<svg class="b" style="left:343px;top:489px;" width="20" height="19" viewBox="0 0 20 19"><defs><linearGradient id="tp" x1="0" y1="0" x2="1" y2="1"><stop offset="0" stop-color="#8fd0fb"/><stop offset="0.5" stop-color="#58b8f6"/><stop offset="1" stop-color="#3aaaf4"/></linearGradient></defs><rect x="0.6" y="0.5" width="18.8" height="11.6" fill="url(#tp)" stroke="#2f86c8" stroke-width="1.1"/><rect x="5" y="13.4" width="10" height="1.1" fill="#8fb4d6"/><rect x="0.4" y="16.3" width="19.2" height="2.1" rx="0.7" fill="#b4bcc8"/></svg>
<span class="t" style="left:369.44px;top:487.00px;font-size:15.5px;line-height:19px;color:#111;transform:scaleX(0.9048);">This PC</span>
<svg class="b" style="left:353px;top:520px;" width="20" height="15" viewBox="0 0 20 15"><defs><linearGradient id="dg" x1="0" y1="0" x2="1" y2="1"><stop offset="0" stop-color="#1e9af5"/><stop offset="0.5" stop-color="#2fa9ff"/><stop offset="1" stop-color="#1794f0"/></linearGradient></defs><rect x="0" y="0" width="20" height="15" rx="0.8" fill="url(#dg)"/><rect x="0" y="12.5" width="20" height="2.5" fill="#0d70c6"/><rect x="2.2" y="13" width="1.6" height="1.2" fill="#d9ecff"/><rect x="16" y="13" width="1.6" height="1.2" fill="#d9ecff"/></svg>
<span class="t" style="left:378.18px;top:517.00px;font-size:15.5px;line-height:19px;color:#111;transform:scaleX(0.9667);">Desktop</span>
<svg class="b" style="left:355px;top:547.6px;" width="15" height="20" viewBox="0 0 15 20"><path d="M0.8 0.8 H10.5 L14.4 4.7 V19.2 H0.8 Z" fill="#fff" stroke="#9a9a9a" stroke-width="1.1"/><path d="M10.5 0.8 V4.7 H14.4" fill="#eee" stroke="#9a9a9a" stroke-width="0.9"/><path d="M5 3.2 L3.2 6 H6.8 Z" fill="#4a90d9"/><rect x="3" y="7.4" width="9" height="1.3" fill="#4a90d9"/><rect x="3" y="10" width="9" height="1.3" fill="#6aa8e4"/><rect x="3" y="12.6" width="4" height="1.3" fill="#6aa8e4"/><rect x="8" y="12.4" width="4" height="3.4" fill="#3b7fd0"/><rect x="3" y="15.2" width="4" height="1.3" fill="#6aa8e4"/></svg>
<span class="t" style="left:378.16px;top:547.00px;font-size:15.5px;line-height:19px;color:#111;transform:scaleX(0.9878);">Documents</span>
<svg class="b" style="left:352.8px;top:577.5px;" width="20" height="20" viewBox="0 0 20 20"><path d="M6.3 0.4 H13.7 V9.4 H19.6 L10 19.6 L0.4 9.4 H6.3 Z" fill="#3a8ee6"/><path d="M6.3 0.4 H13.7 V2 H6.3Z" fill="#5aa5ee"/></svg>
<span class="t" style="left:378.17px;top:577.00px;font-size:15.5px;line-height:19px;color:#111;transform:scaleX(0.9762);">Downloads</span>
<svg class="b" style="left:353.5px;top:610px;" width="19" height="19" viewBox="0 0 19 19"><path d="M3.4 1 H15.2 L17.6 5.6 H1.2 Z" fill="#d4d4d4"/><rect x="1" y="5.2" width="16.8" height="4.9" rx="1" fill="#3a3a3a"/><rect x="13.4" y="6.9" width="2.2" height="1.5" fill="#44d04a"/><rect x="7.8" y="10.1" width="3.2" height="4" fill="#2fb344"/><rect x="0.8" y="13.4" width="17.2" height="3.2" rx="0.6" fill="#3dbb50"/></svg>
<span class="t" style="left:378.28px;top:607.00px;font-size:15.5px;line-height:19px;color:#111;transform:scaleX(0.8895);">E on MI-DESKTOP</span>
<svg class="b" style="left:355.5px;top:637.3px;" width="14" height="20" viewBox="0 0 14 20"><path d="M6.2 1.2 V14.8" stroke="#1f8fe8" stroke-width="1.8" fill="none"/><path d="M6.2 0.6 Q9.5 2.2 12.2 5.8 Q13.4 8 11.6 11 Q12 7.2 6.2 5.4 Z" fill="#1f8fe8"/><ellipse cx="3.7" cy="16.2" rx="3.5" ry="2.7" fill="#1f8fe8"/></svg>
<span class="t" style="left:378.13px;top:637.00px;font-size:15.5px;line-height:19px;color:#111;transform:scaleX(1.0117);">Music</span>
<svg class="b" style="left:353px;top:670px;" width="20" height="15" viewBox="0 0 20 15"><rect x="0.5" y="0.5" width="19" height="14" fill="#fff" stroke="#a8a8a8" stroke-width="1"/><defs><linearGradient id="pg" x1="0" y1="0" x2="0" y2="1"><stop offset="0" stop-color="#7cb6f2"/><stop offset="0.55" stop-color="#d8ecfb"/><stop offset="1" stop-color="#fff"/></linearGradient></defs><rect x="2" y="2" width="16" height="11" fill="url(#pg)"/><path d="M2 6.4 Q7 5 11 8 Q14.5 10 18 10.2 V13 H2 Z" fill="#2c5f62"/><path d="M2 10.6 Q8 9.2 18 11.6 V13 H2Z" fill="#e9f1ee"/></svg>
<span class="t" style="left:378.19px;top:667.00px;font-size:15.5px;line-height:19px;color:#111;transform:scaleX(0.9584);">Pictures</span>
<svg class="b" style="left:354px;top:698px;" width="18" height="19" viewBox="0 0 18 19"><rect x="0.4" y="0.4" width="17.2" height="18.2" fill="#3b3b3b" stroke="#222" stroke-width="0.8"/><rect x="1.3" y="1.6" width="1.8" height="2" fill="#e8e8e8"/><rect x="14.9" y="1.6" width="1.8" height="2" fill="#e8e8e8"/><rect x="1.3" y="5.1" width="1.8" height="2" fill="#e8e8e8"/><rect x="14.9" y="5.1" width="1.8" height="2" fill="#e8e8e8"/><rect x="1.3" y="8.6" width="1.8" height="2" fill="#e8e8e8"/><rect x="14.9" y="8.6" width="1.8" height="2" fill="#e8e8e8"/><rect x="1.3" y="12.1" width="1.8" height="2" fill="#e8e8e8"/><rect x="14.9" y="12.1" width="1.8" height="2" fill="#e8e8e8"/><rect x="1.3" y="15.6" width="1.8" height="2" fill="#e8e8e8"/><rect x="14.9" y="15.6" width="1.8" height="2" fill="#e8e8e8"/><rect x="4.2" y="1.4" width="9.6" height="7.6" fill="#3a7ad0"/><rect x="4.2" y="10" width="9.6" height="7.6" fill="#3a7ad0"/><rect x="4.2" y="6" width="9.6" height="3" fill="#d9a441"/><rect x="4.2" y="14.6" width="9.6" height="3" fill="#4a8a3a"/><rect x="8" y="2.6" width="4" height="3.4" fill="#e2b34f"/><rect x="9" y="11" width="3.4" height="3.4" fill="#c9903a"/></svg>
<span class="t" style="left:378.91px;top:697.00px;font-size:15.5px;line-height:19px;color:#111;transform:scaleX(0.9374);">Videos</span>
<svg class="b" style="left:353px;top:729.5px;" width="19" height="19" viewBox="0 0 19 19"><rect x="0" y="0" width="3.3" height="3.3" fill="#29a8f2"/><rect x="4.1" y="0" width="3.3" height="3.3" fill="#29a8f2"/><rect x="0" y="4.1" width="3.3" height="3.3" fill="#29a8f2"/><rect x="4.1" y="4.1" width="3.3" height="3.3" fill="#29a8f2"/><path d="M3.4 6.6 H15.2 L17.6 11.2 H1.2 Z" fill="#d4d4d4"/><rect x="1" y="10.8" width="16.8" height="4.9" rx="1" fill="#3a3a3a"/><rect x="13.4" y="12.5" width="2.2" height="1.5" fill="#44d04a"/></svg>
<span class="t" style="left:378.23px;top:727.00px;font-size:15.5px;line-height:19px;color:#111;transform:scaleX(0.9316);">Local Disk (C:)</span>
<svg class="b" style="left:353.5px;top:764.5px;" width="19" height="19" viewBox="0 0 19 19"><path d="M3.4 1 H15.2 L17.6 5.6 H1.2 Z" fill="#d4d4d4"/><rect x="1" y="5.2" width="16.8" height="4.9" rx="1" fill="#3a3a3a"/><rect x="13.4" y="6.9" width="2.2" height="1.5" fill="#44d04a"/></svg>
<span class="t" style="left:378.26px;top:757.00px;font-size:15.5px;line-height:19px;color:#111;transform:scaleX(0.9018);">Data (E:)</span>
<svg class="b" style="left:343px;top:797.3px;" width="20" height="20" viewBox="0 0 20 20"><defs><radialGradient id="ng" cx="0.4" cy="0.35" r="0.7"><stop offset="0" stop-color="#b9e2fb"/><stop offset="0.6" stop-color="#4f9fd8"/><stop offset="1" stop-color="#2f7fbf"/></radialGradient><linearGradient id="nm" x1="0" y1="0" x2="1" y2="1"><stop offset="0" stop-color="#6ec3fa"/><stop offset="1" stop-color="#2b98ee"/></linearGradient></defs><circle cx="13" cy="6.8" r="6.6" fill="url(#ng)"/><path d="M8 4.5 Q12 2.5 16 4 M7.4 8.5 Q13 6.5 19 8.5" stroke="#e6f4fd" stroke-width="0.9" fill="none"/><rect x="0.6" y="7.9" width="14.2" height="9.4" fill="url(#nm)" stroke="#2f86c8" stroke-width="1"/><rect x="4" y="18.9" width="7.4" height="0.9" fill="#5a9ad0"/></svg>
<span class="t" style="left:368.45px;top:797.00px;font-size:15.5px;line-height:19px;color:#111;transform:scaleX(0.9945);">Network</span>
<svg class="b" style="left:684.5px;top:303px;" width="10" height="6" viewBox="0 0 10 6"><path d="M0.6 5.4 L5.0 0.9 L9.4 5.4" fill="none" stroke="#8a8a8a" stroke-width="1.2"/></svg>
<span class="t" style="left:532.72px;top:309.00px;font-size:15.5px;line-height:19px;color:#4c607a;transform:scaleX(1.0145);">Name</span>
<span class="t" style="left:858.75px;top:309.00px;font-size:15.5px;line-height:19px;color:#4c607a;transform:scaleX(0.9905);">Date modified</span>
<span class="t" style="left:1009.73px;top:309.00px;font-size:15.5px;line-height:19px;color:#4c607a;transform:scaleX(0.9342);">Type</span>
<span class="t" style="left:1158.42px;top:309.00px;font-size:15.5px;line-height:19px;color:#4c607a;transform:scaleX(0.8602);">Size</span>
<div class="b" style="left:851px;top:304px;width:1px;height:30px;background:#e5e5e5;"></div>
<div class="b" style="left:1001px;top:304px;width:1px;height:30px;background:#e5e5e5;"></div>
<div class="b" style="left:1150.5px;top:304px;width:1px;height:30px;background:#e5e5e5;"></div>
<div class="b" style="left:1250.5px;top:304px;width:1px;height:30px;background:#e5e5e5;"></div>
<div class="b" style="left:530px;top:368px;width:716px;height:26.5px;background:#cce8ff;border:1px solid #a8d7ff;"></div>
<svg class="b" style="left:537px;top:343.7px;" width="16" height="20" viewBox="0 0 16 20"><path d="M0.7 0.7 H10.6 L15 5 V19.3 H0.7 Z" fill="#fff" stroke="#9b9b9b" stroke-width="1.1"/><path d="M10.6 0.7 V5 H15" fill="#f0f0f0" stroke="#9b9b9b" stroke-width="0.9"/><rect x="3" y="5.8" width="6.6" height="1" fill="#8f8f8f"/><rect x="3" y="7.9" width="9.6" height="1" fill="#8f8f8f"/><rect x="3" y="10.0" width="9.6" height="1" fill="#8f8f8f"/><rect x="3" y="12.100000000000001" width="9.6" height="1" fill="#8f8f8f"/><rect x="3" y="14.2" width="9.6" height="1" fill="#8f8f8f"/><rect x="3" y="16.3" width="9.6" height="1" fill="#8f8f8f"/></svg>
<span class="t" style="left:560.11px;top:345.00px;font-size:15.5px;line-height:19px;color:#111;transform:scaleX(0.9406);">certificate Request</span>
<span class="t" style="left:858.91px;top:345.00px;font-size:15.5px;line-height:19px;color:#6d6d6d;transform:scaleX(0.9374);">11/27/2018 4:48 PM</span>
<span class="t" style="left:1009.72px;top:345.00px;font-size:15.5px;line-height:19px;color:#6d6d6d;transform:scaleX(0.9589);">Text Document</span>
<span class="t" style="left:1211.82px;top:345.00px;font-size:15.5px;line-height:19px;color:#6d6d6d;transform:scaleX(0.8837);">2 KB</span>
<svg class="b" style="left:535px;top:373px;" width="20" height="17.5" viewBox="0 0 20 17.5"><rect x="0.7" y="0.7" width="18.4" height="13" fill="#fff" stroke="#8a8a8a" stroke-width="1.3"/><rect x="2.4" y="2.4" width="15" height="9.6" fill="none" stroke="#d3c6b8" stroke-width="0.7"/><rect x="5" y="4.4" width="9.6" height="1" fill="#a9b9d6"/><rect x="4" y="6.6" width="8" height="0.9" fill="#b9b9c6"/><rect x="4" y="8.6" width="5.6" height="0.9" fill="#c6c6c6"/><path d="M11.4 12 L10.6 17.2 L13.4 15.6 L16 17.2 L15.4 12 Z" fill="#3d5a9e"/><circle cx="13.4" cy="11.4" r="2.7" fill="#e8a92e" stroke="#c98a14" stroke-width="0.6"/></svg>
<span class="t" style="left:559.68px;top:372.00px;font-size:15.5px;line-height:19px;color:#111;transform:scaleX(1.0015);">myhttpswebappnl</span>
<span class="t" style="left:858.89px;top:372.00px;font-size:15.5px;line-height:19px;color:#6d6d6d;transform:scaleX(0.9527);">11/28/2018 9:46 AM</span>
<span class="t" style="left:1008.85px;top:372.00px;font-size:15.5px;line-height:19px;color:#6d6d6d;transform:scaleX(0.9554);">Security Certificate</span>
<span class="t" style="left:1211.99px;top:372.00px;font-size:15.5px;line-height:19px;color:#6d6d6d;transform:scaleX(0.8784);">3 KB</span>
<span class="t" style="left:329.85px;top:957.00px;font-size:15.5px;line-height:19px;color:#1f2b3a;transform:scaleX(0.9644);">2 items</span>
<span class="t" style="left:403.39px;top:957.00px;font-size:15.5px;line-height:19px;color:#1f2b3a;transform:scaleX(0.9549);">1 item selected</span>
<span class="t" style="left:509.21px;top:957.00px;font-size:15.5px;line-height:19px;color:#1f2b3a;transform:scaleX(0.8885);">2.21 KB</span>
<div class="b" style="left:390.5px;top:958px;width:1px;height:17px;background:#eeeeee;"></div>
<div class="b" style="left:1654.6px;top:952.3px;width:27.2px;height:28.8px;background:#c9e6fa;border:1.3px solid #5f9bc6;"></div>
<svg class="b" style="left:1659px;top:958px;" width="21" height="16" viewBox="0 0 21 16"><rect x="0.5" y="0.3" width="6" height="15.3" fill="#d4d8dc"/><rect x="1.6" y="1.2" width="3.8" height="3.7" fill="#fff"/><rect x="3" y="2.4" width="1" height="1.5" fill="#5a7fd0"/><rect x="8" y="2.4" width="4.8" height="1.4" fill="#76889a"/><rect x="15" y="2.4" width="5" height="1.4" fill="#76889a"/><rect x="1.6" y="6.1" width="3.8" height="3.7" fill="#fff"/><rect x="3" y="7.3" width="1" height="1.5" fill="#7a9ad8"/><rect x="8" y="7.3" width="4.8" height="1.4" fill="#76889a"/><rect x="15" y="7.3" width="5" height="1.4" fill="#76889a"/><rect x="1.6" y="11" width="3.8" height="3.7" fill="#fff"/><rect x="3" y="12.2" width="1" height="1.5" fill="#c0392b"/><rect x="8" y="12.2" width="4.8" height="1.4" fill="#76889a"/><rect x="15" y="12.2" width="5" height="1.4" fill="#76889a"/></svg>
<svg class="b" style="left:1686.8px;top:958px;" width="17.5" height="14" viewBox="0 0 17.5 14"><rect x="0.6" y="0.6" width="16.2" height="12.6" fill="#fff" stroke="#a0a0a0" stroke-width="1.2"/><defs><linearGradient id="vg" x1="0" y1="0" x2="0" y2="1"><stop offset="0" stop-color="#5f93e0"/><stop offset="0.4" stop-color="#bcd9f2"/><stop offset="1" stop-color="#e8f0f4"/></linearGradient></defs><rect x="2.4" y="2.6" width="12.6" height="8.6" fill="url(#vg)"/><path d="M2.4 6.4 Q6.5 4.4 10 7 Q13 9 15 9 V11.2 H2.4Z" fill="#2f5f5e"/><path d="M2.4 9.6 Q8 8.6 15 10.4 V11.2 H2.4Z" fill="#dfe9ea"/></svg>
</div>
<svg class="b" style="left:1040px;top:612px;" width="22" height="30" viewBox="0 0 22 30"><path d="M3.5 3.2 V23.4 L8.3 19.4 L11.4 26.3 Q12.8 27.4 14.2 26 L15 24.6 L12.4 18.6 L17.6 18.2 Q18.2 17.4 17.4 16.6 Z" fill="#fff" stroke="#1a1a1a" stroke-width="1.15" stroke-linejoin="round"/></svg>
</div>
</body></html>
